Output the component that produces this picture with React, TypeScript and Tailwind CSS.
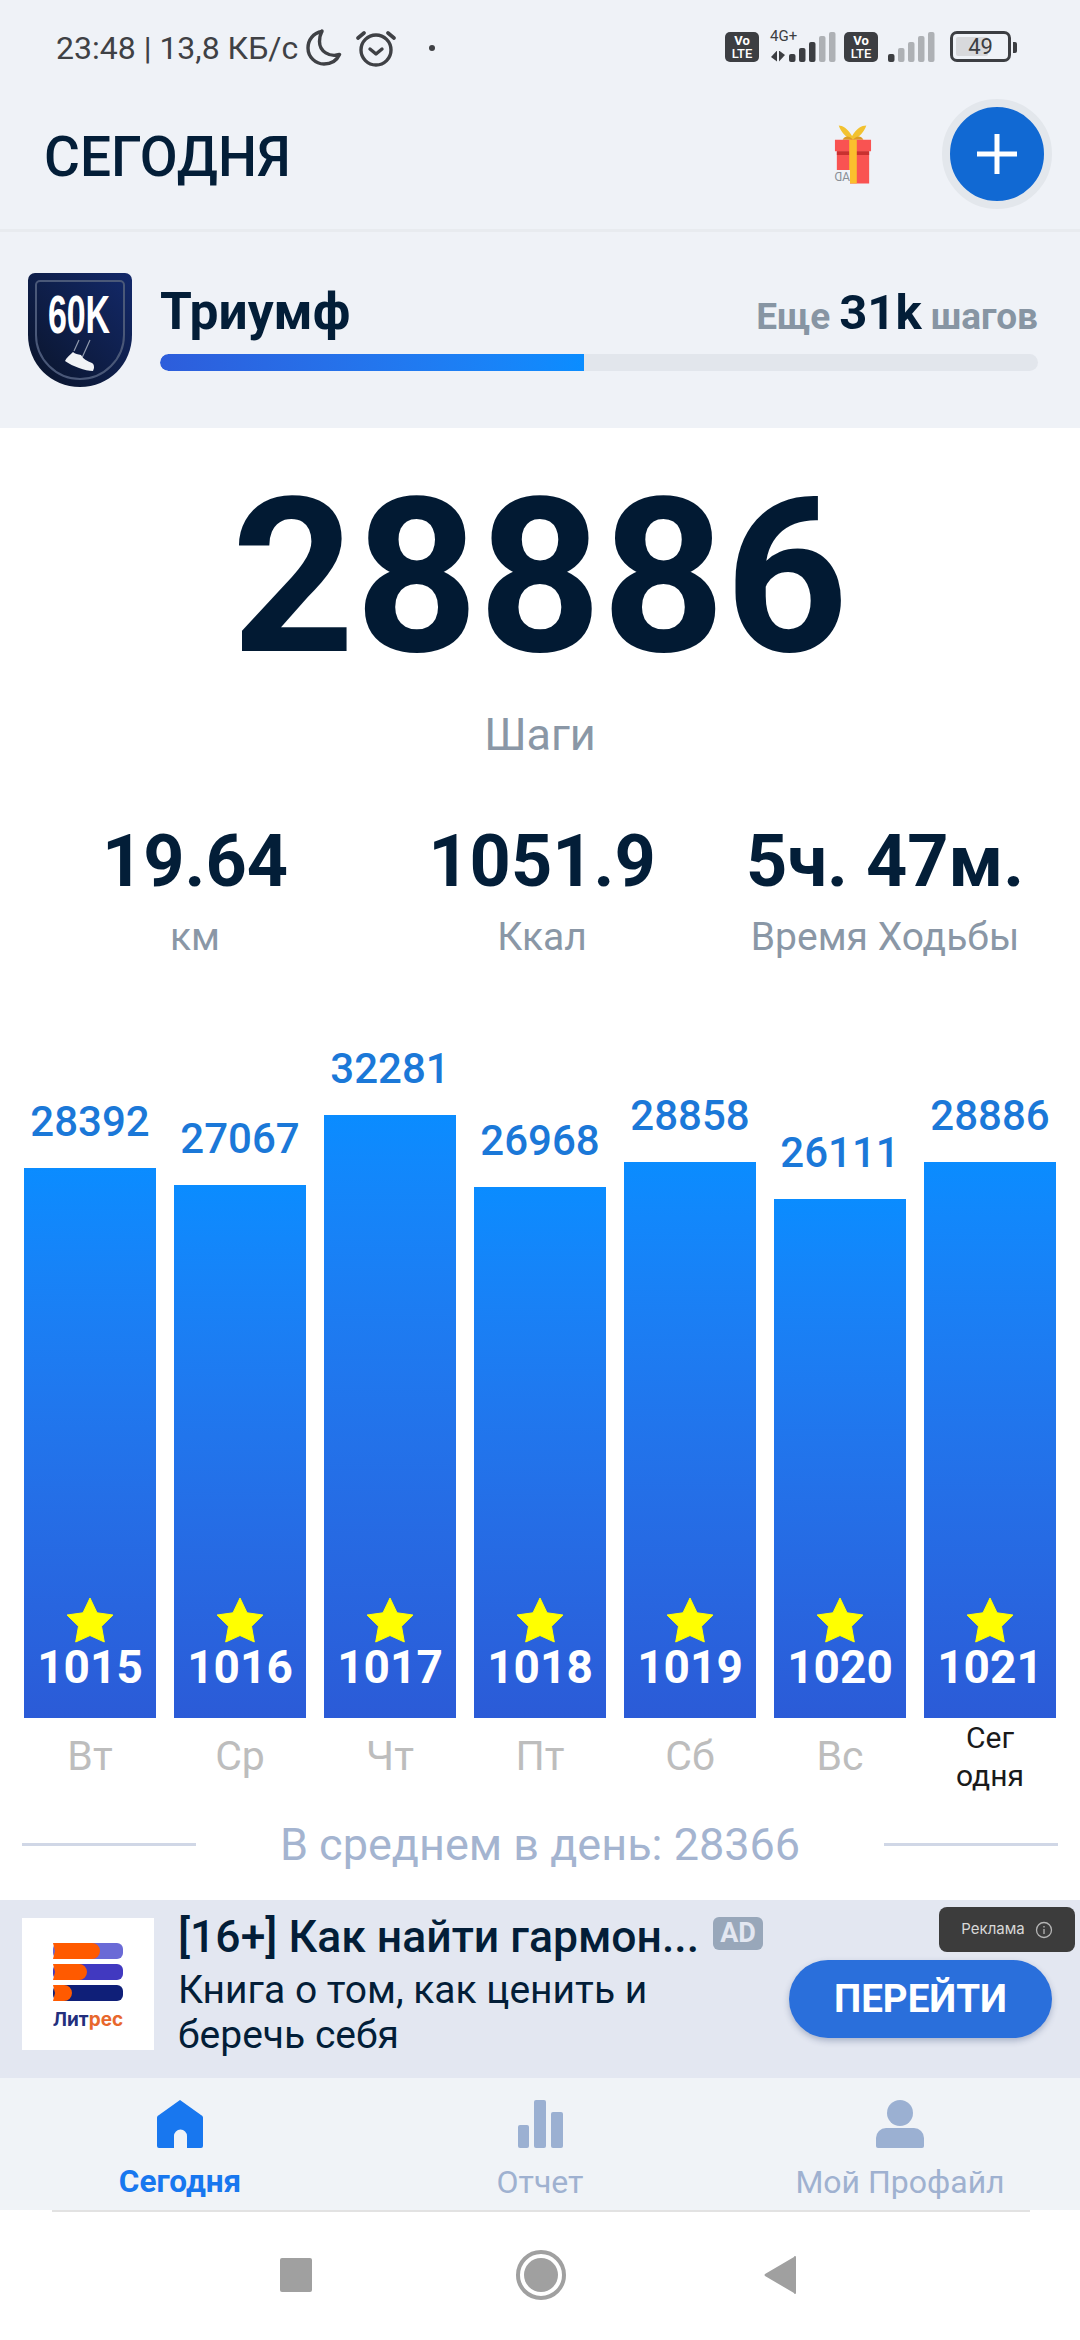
const week = [
  { steps: 28392, height: 550, day: "Вт", num: 1015 },
  { steps: 27067, height: 533, day: "Ср", num: 1016 },
  { steps: 32281, height: 603, day: "Чт", num: 1017 },
  { steps: 26968, height: 531, day: "Пт", num: 1018 },
  { steps: 28858, height: 556, day: "Сб", num: 1019 },
  { steps: 26111, height: 519, day: "Вс", num: 1020 },
  { steps: 28886, height: 556, day: "", num: 1021 },
];

function VoLte() {
  return (
    <div className="w-[34px] h-[30px] rounded-[5px] bg-[#3c3e42] flex flex-col items-center justify-center text-white font-bold text-[13px] leading-[13px]">
      <span>Vo</span>
      <span className="font-medium">LTE</span>
    </div>
  );
}

function Signal({ active }: { active: number }) {
  const heights = [8, 14, 20, 26, 30];
  return (
    <svg width="48" height="30" viewBox="0 0 48 30" className="block">
      {heights.map((h, i) => (
        <rect
          key={i}
          x={i * 10 + 1}
          y={30 - h}
          width="6.5"
          height={h}
          rx="2"
          fill={i < active ? "#3c3e42" : "#aeb1b5"}
        />
      ))}
    </svg>
  );
}

function StatusBar() {
  return (
    <div className="h-[96px] flex items-start justify-between pl-[56px] pr-[63px] pt-[30px] text-[#3f4145]">
      <div className="flex items-center h-[36px]">
        <span className="text-[32px] leading-[36px] whitespace-nowrap">23:48 | 13,8 КБ/с</span>
        <svg className="ml-[8px]" width="36" height="38" viewBox="0 0 36 38" fill="none" stroke="#3f4145" strokeWidth="3.4">
          <path d="M16 2.500C7 4 2 11 2 19c0 9 7.500 16 16 16 7.500 0 13-4 15.500-9.500-10 3-20-3-20-13 0-4 1-7.500 2.500-10.500Z" strokeLinejoin="round" />
        </svg>
        <svg className="ml-[14px]" width="40" height="38" viewBox="0 0 40 38" fill="none" stroke="#3f4145" strokeWidth="3.400" strokeLinecap="round">
          <circle cx="20" cy="21" r="15" />
          <path d="M14 20l6 5 6-5" strokeLinejoin="round" />
          <path d="M2 9l6-5M38 9l-6-5" strokeWidth="3.600" />
        </svg>
        <div className="ml-[33px] w-[6px] h-[6px] rounded-full bg-[#3f4145]" />
      </div>
      <div className="flex items-end h-[32px]">
        <VoLte />
        <div className="ml-[9px] relative flex items-end">
          <div className="w-[20px] h-[12px] flex items-center justify-center gap-[2px]">
            <span className="w-[6px] h-[11px] bg-[#3c3e42] [clip-path:polygon(100%_0,100%_100%,0_60%)]" />
            <span className="w-[6px] h-[11px] bg-[#3c3e42] [clip-path:polygon(0_0,100%_40%,0_100%)]" />
          </div>
          <Signal active={3} />
          <span className="absolute left-[2px] top-[-4px] text-[15px] leading-[16px] text-[#3c3e42]">4G+</span>
        </div>
        <div className="ml-[8px]">
          <VoLte />
        </div>
        <div className="ml-[9px]">
          <Signal active={1} />
        </div>
        <div className="ml-[15px] w-[61px] h-[31px] border-[3px] border-[#3c3e42] rounded-[7px] flex items-center p-[3px] relative">
          <div className="w-[66%] h-full bg-[#d8d9dc] rounded-[2px]" />
          <span className="absolute inset-0 text-center text-[22px] leading-[25px] text-[#3c3e42]">49</span>
        </div>
        <div className="ml-[2px] mb-[9px] w-[4px] h-[11px] rounded-r-[2px] bg-[#3c3e42]" />
      </div>
    </div>
  );
}

function Gift() {
  return (
    <div className="relative w-[38px] h-[62px]">
      <svg width="38" height="62" viewBox="0 0 40 64" className="block">
        <path d="M18 17C12 14 7 8 5 2c4 0 9 3 14 11 5-8 10-11 15-11-2 6-7 12-13 15Z" fill="#f2c230" />
        <path d="M9 17c3-5 7-4 11 0 4-4 8-5 11 0Z" fill="#dc9a24" />
        <path d="M1 17h38v12H1z" fill="#f95352" />
        <path d="M3 29h34v34H3z" fill="#f95352" />
        <path d="M3 29h34v4H3z" fill="#c9302f" />
        <path d="M16 17h8v46h-8z" fill="#fbbf2d" />
      </svg>
      <span className="absolute left-[2px] bottom-0 w-[14px] h-[15px] bg-[#eff2f7] text-[#8a8f96] text-[12px] leading-[15px] text-center -scale-x-100">AD</span>
    </div>
  );
}

function Header() {
  return (
    <div className="h-[136px] flex items-center justify-between pl-[44px] pr-[28px] border-b-[3px] border-[#e8ebef]">
      <h1 className="text-[55px] font-medium text-[#031e38] leading-none -mt-[10px]">СЕГОДНЯ</h1>
      <div className="flex items-center -mt-[18px]">
        <Gift />
        <button className="ml-[70px] w-[110px] h-[110px] rounded-full bg-[#1169d3] border-[8px] border-[#e3e7ec] flex items-center justify-center">
          <svg width="40" height="40" viewBox="0 0 40 40">
            <path d="M17.500 0h5v17.500H40v5H22.500V40h-5V22.500H0v-5h17.500Z" fill="#fff" />
          </svg>
        </button>
      </div>
    </div>
  );
}

function Badge() {
  return (
    <svg width="104" height="114" viewBox="0 0 104 114" className="shrink-0">
      <defs>
        <linearGradient id="shield" x1="1" y1="0" x2="0" y2="1">
          <stop offset="0" stopColor="#13296a" />
          <stop offset="1" stopColor="#0a1429" />
        </linearGradient>
      </defs>
      <path d="M7 0h90a7 7 0 0 1 7 7v55c0 29-23 52-52 52S0 91 0 62V7a7 7 0 0 1 7-7Z" fill="url(#shield)" />
      <path d="M12 8h80a4 4 0 0 1 4 4v50c0 24-20 44-44 44S8 86 8 62V12a4 4 0 0 1 4-4Z" fill="none" stroke="#4a5878" strokeWidth="2" />
      <text transform="translate(51 60) scale(0.64 1)" textAnchor="middle" fill="#fff" fontFamily="Liberation Sans" fontWeight="700" fontSize="53">60K</text>
      <path d="M51 67l-5 11M62 67l-9 20" stroke="#8f99ad" strokeWidth="1.200" fill="none" />
      <path d="M45 79c2 2 5 2 8 3 2 4 6 6 11 8 2 1 2 3 2 5l-1 3c-4 0-9-1-14-3-5-2-10-4-14-7 1-3 5-6 8-9Z" fill="#f1f3f6" />
    </svg>
  );
}

function Goal() {
  return (
    <div className="h-[196px] flex items-start pl-[28px] pr-[42px] pt-[41px]">
      <Badge />
      <div className="ml-[28px] flex-1">
        <div className="flex items-baseline justify-between h-[81px]">
          <span className="text-[51.500px] font-bold text-[#031e38] leading-[78px]">Триумф</span>
          <div className="flex items-baseline gap-[9px] font-bold text-[#8795a3] text-[37px] leading-[78px]">
            <span>Еще</span>
            <span className="text-[49px] text-[#031e38]">31k</span>
            <span>шагов</span>
          </div>
        </div>
        <div className="h-[17px] rounded-full bg-[#e2e6ec] overflow-hidden">
          <div className="w-[48.300%] h-full rounded-l-full bg-gradient-to-r from-[#2d5ddb] to-[#0a8dff]" />
        </div>
      </div>
    </div>
  );
}

function Stat({ value, label, width }: { value: string; label: string; width: string }) {
  return (
    <div className={`flex flex-col items-center ${width}`}>
      <span className="text-[72px] font-bold text-[#031e38] leading-[78px] whitespace-nowrap">{value}</span>
      <span className="text-[39px] text-[#8a97a6] leading-[44px] mt-[14px] whitespace-nowrap">{label}</span>
    </div>
  );
}

function Summary() {
  return (
    <div className="flex flex-col items-center">
      <div className="text-[215px] font-bold text-[#021a33] leading-[240px] mt-[30px]">28886</div>
      <div className="text-[45px] text-[#8a97a6] leading-[50px] mt-[12px]">Шаги</div>
      <div className="flex w-full justify-start mt-[63px]">
        <Stat value="19.64" label="км" width="w-[390px]" />
        <Stat value="1051.9" label="Ккал" width="w-[304px]" />
        <Stat value="5ч. 47м." label="Время Ходьбы" width="w-[382px]" />
      </div>
    </div>
  );
}

function Chart() {
  return (
    <div className="flex items-end gap-[18px] px-[24px] mt-[85px]">
      {week.map((d) => (
        <div key={d.num} className="w-[132px] flex flex-col items-center">
          <span className="text-[42px] font-medium text-[#1b78d8] leading-[50px] mb-[21px]">{d.steps}</span>
          <div
            className="w-full bg-gradient-to-b from-[#0a8cff] to-[#2b5bd7] flex flex-col items-center justify-end pb-[28px]"
            style={{ height: d.height }}
          >
            <svg width="48" height="46" viewBox="0 0 48 46">
              <path d="M24 1l7 14.800 16 2.200-11.500 11.300 2.800 15.700L24 38.500 9.700 45l2.800-15.700L1 18l16-2.200Z" fill="#ffff00" stroke="#ffff00" strokeLinejoin="round" />
            </svg>
            <span className="text-[46px] font-bold text-white leading-[46px] mt-[1px]">{d.num}</span>
          </div>
          <div className="h-[76px] flex items-center justify-center">
            {d.day ? (
              <span className="text-[41px] text-[#bdbdbd] leading-none">{d.day}</span>
            ) : (
              <span className="text-[30px] text-[#1a1a1a] leading-[38px] text-center mt-[1px]">
                Сег
                <br />
                одня
              </span>
            )}
          </div>
        </div>
      ))}
    </div>
  );
}

function Average() {
  return (
    <div className="flex items-center justify-between px-[22px] h-[60px] mt-[20px]">
      <div className="w-[174px] h-[3px] bg-[#d0d7e6]" />
      <span className="text-[45px] text-[#a4b4d0] leading-none whitespace-nowrap">В среднем в день: 28366</span>
      <div className="w-[174px] h-[3px] bg-[#d0d7e6]" />
    </div>
  );
}

function LitresLogo() {
  return (
    <div className="w-[132px] h-[132px] bg-white flex flex-col items-center pt-[25px] shrink-0">
      <svg width="70" height="58" viewBox="0 0 70 58" className="block">
        <rect x="0" y="0" width="70" height="16" rx="6" fill="#6a6ad6" />
        <path d="M0 0h39a8 8 0 0 1 0 16H0l2-8Z" fill="#ff5a00" />
        <rect x="0" y="21" width="70" height="16" rx="6" fill="#4139c0" />
        <path d="M0 21h26a8 8 0 0 1 0 16H0l2-8Z" fill="#ff5a00" />
        <rect x="0" y="42" width="70" height="16" rx="6" fill="#0f1f78" />
        <path d="M0 42h11a8 8 0 0 1 0 16H0l2-8Z" fill="#ff5a00" />
      </svg>
      <div className="font-['Inter'] font-bold text-[19px] leading-[20px] mt-[9px]">
        <span className="text-[#232f7d]">Лит</span>
        <span className="text-[#e8672c]">рес</span>
      </div>
    </div>
  );
}

function Ad() {
  return (
    <div className="relative h-[178px] shrink-0 bg-[#e3e7f1] flex items-start pl-[22px] pt-[18px]">
      <LitresLogo />
      <div className="ml-[24px] -mt-[9px]">
        <div className="flex items-center">
          <span className="text-[44.500px] font-medium text-[#031e38] leading-[56px] whitespace-nowrap">[16+] Как найти гармон...</span>
          <span className="ml-[14px] -mt-[8px] w-[50px] h-[33px] rounded-[6px] bg-[#98a7ba] text-[#e3e7f1] font-bold text-[27px] leading-[33px] text-center">AD</span>
        </div>
        <p className="text-[39px] text-[#031e38] leading-[45px] mt-[3px]">
          Книга о том, как ценить и
          <br />
          беречь себя
        </p>
      </div>
      <button className="absolute left-[789px] top-[60px] w-[263px] h-[78px] rounded-full bg-[#2a6fdb] text-white font-bold text-[38.500px] shadow-[0_3px_6px_rgba(40,60,110,0.3)]">
        ПЕРЕЙТИ
      </button>
      <div className="absolute left-[939px] top-[7px] w-[136px] h-[45px] rounded-[8px] bg-[#3c3c3c] flex items-center justify-center gap-[10px] text-[#d8d8d8] font-['Inter'] text-[15px]">
        Реклама
        <svg width="18" height="18" viewBox="0 0 18 18" fill="none" stroke="#b5b5b5" strokeWidth="1.300">
          <circle cx="9" cy="9" r="7.500" />
          <path d="M9 8v5M9 5v1.500" />
        </svg>
      </div>
    </div>
  );
}

function NavBar() {
  return (
    <div className="h-[132px] shrink-0 bg-[#f0f3f7] flex pt-[22px]">
      <div className="flex-1 flex flex-col items-center">
        <svg width="46" height="48" viewBox="0 0 46 48">
          <path d="M23 0l21 15a3 3 0 0 1 2 3v28a2 2 0 0 1-2 2H30V36a6.500 6.500 0 0 0-13 0v12H2a2 2 0 0 1-2-2V18a3 3 0 0 1 2-3Z" fill="#1877ef" />
        </svg>
        <span className="text-[31.500px] font-bold text-[#1877ef] leading-[36px] mt-[16px]">Сегодня</span>
      </div>
      <div className="flex-1 flex flex-col items-center">
        <svg width="45" height="48" viewBox="0 0 45 48" fill="#9bb0d2">
          <rect x="0" y="25" width="11" height="23" rx="2" />
          <rect x="16" y="0" width="12" height="48" rx="2" />
          <rect x="33" y="12" width="12" height="36" rx="2" />
        </svg>
        <span className="text-[32px] text-[#9fb1d0] leading-[36px] mt-[16px]">Отчет</span>
      </div>
      <div className="flex-1 flex flex-col items-center">
        <svg width="48" height="48" viewBox="0 0 48 48" fill="#9bb0d2">
          <ellipse cx="24" cy="13" rx="13" ry="13" />
          <path d="M10 28h28a10 10 0 0 1 10 10v8a2 2 0 0 1-2 2H2a2 2 0 0 1-2-2v-8a10 10 0 0 1 10-10Z" />
        </svg>
        <span className="text-[32px] text-[#9fb1d0] leading-[36px] mt-[16px]">Мой Профайл</span>
      </div>
    </div>
  );
}

function SystemNav() {
  return (
    <div className="h-[130px] shrink-0 bg-white relative pt-[40px]">
      <div className="absolute left-[52px] right-[50px] top-0 h-[2px] bg-[#e2e2e2]" />
      <div className="flex items-center pl-[280px] h-[50px]">
        <div className="w-[32px] h-[34px] bg-[#a0a0a0] rounded-[2px]" />
        <div className="ml-[204px] w-[50px] h-[50px] rounded-full border-[4px] border-[#a0a0a0] flex items-center justify-center">
          <div className="w-[34px] h-[34px] rounded-full bg-[#a0a0a0]" />
        </div>
        <svg className="ml-[198px]" width="33" height="38" viewBox="0 0 33 38">
          <path d="M32 1v36a1 1 0 0 1-2 0L1 20a1.500 1.500 0 0 1 0-2L30 1a1 1 0 0 1 2 0Z" fill="#a0a0a0" />
        </svg>
      </div>
    </div>
  );
}

export default function App() {
  return (
    <div className="w-[1080px] h-[2340px] flex flex-col bg-white font-['Roboto',sans-serif] overflow-hidden">
      <div className="bg-[#eff2f7] shrink-0">
        <StatusBar />
        <Header />
        <Goal />
      </div>
      <div className="flex-1 flex flex-col min-h-0">
        <Summary />
        <Chart />
        <Average />
      </div>
      <Ad />
      <NavBar />
      <SystemNav />
    </div>
  );
}
